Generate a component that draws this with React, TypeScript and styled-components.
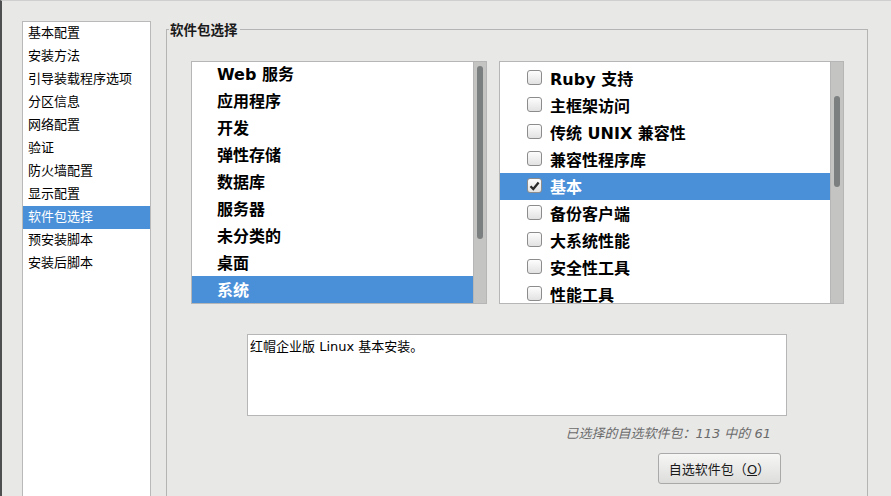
import React from 'react';
import styled, { createGlobalStyle } from 'styled-components';

const GlobalStyle = createGlobalStyle`
  html, body {
    margin: 0;
    padding: 0;
    background: #e8e8e7;
    overflow: hidden;
  }
  * { box-sizing: border-box; }
`;

const FONT = `"DejaVu Sans", "Noto Sans CJK SC", sans-serif`;

const Window = styled.div`
  width: 891px;
  height: 496px;
  overflow: hidden;
  background: #e8e8e7;
  border-top: 1px solid #cfcfcf;
  border-left: 2px solid #4e4f50;
  display: flex;
  align-items: flex-start;
  font-family: ${FONT};
  color: #000;
`;

const Nav = styled.ul`
  list-style: none;
  margin: 20px 0 0 20px;
  padding: 0;
  width: 129px;
  height: 520px;
  background: #fff;
  border: 1px solid #b9b9b9;
`;

const NavItem = styled.li<{ $active?: boolean }>`
  height: 23px;
  padding: 0 0 4px 5px;
  display: flex;
  align-items: center;
  font-size: 13px;
  background: ${p => (p.$active ? '#4a90d9' : 'transparent')};
  color: ${p => (p.$active ? '#fff' : '#000')};
`;

const Fieldset = styled.fieldset`
  margin: 18px 0 0 15px;
  padding: 0;
  width: 702px;
  height: 520px;
  border: 1px solid #b4b4b4;
  border-bottom: none;
  display: flex;
  flex-direction: column;
`;

const Legend = styled.legend`
  font-size: 13.5px;
  font-weight: bold;
  padding: 0 2px 0 1px;
  margin-left: 2px;
  color: #1a1a1a;
`;

const Lists = styled.div`
  display: flex;
  gap: 12px;
  margin: 22px 0 0 24px;
`;

const ListBox = styled.div<{ $width: number }>`
  width: ${p => p.$width}px;
  height: 243px;
  background: #fff;
  border: 1px solid #b6b6b6;
  display: flex;
  overflow: hidden;
`;

const Rows = styled.div<{ $offset: number }>`
  flex: 1;
  margin-top: ${p => p.$offset}px;
  overflow: hidden;
`;

const GroupRow = styled.div<{ $active?: boolean }>`
  height: 27px;
  padding: 0 0 2px 25px;
  display: flex;
  align-items: center;
  font-size: 16px;
  font-weight: bold;
  background: ${p => (p.$active ? '#4a90d9' : 'transparent')};
  color: ${p => (p.$active ? '#fff' : '#000')};
`;

const PackageRow = styled(GroupRow)`
  padding-left: 27px;
  gap: 8px;
  flex-shrink: 0;
`;

const Check = styled.span`
  width: 15px;
  height: 15px;
  border: 1px solid #8c8c8c;
  border-radius: 3px;
  background: linear-gradient(#fdfdfd, #e2e2e2);
  display: flex;
  align-items: center;
  justify-content: center;
  flex-shrink: 0;
`;

const Track = styled.div`
  width: 13px;
  height: 100%;
  background: #c4c5c3;
  border-left: 1px solid #b6b6b6;
  position: relative;
  flex-shrink: 0;
`;

const Thumb = styled.div`
  position: absolute;
  left: 3px;
  width: 6px;
  background: #7b7f7f;
  border-radius: 3px;
`;

const Bottom = styled.div`
  width: 540px;
  margin: 30px 0 0 80px;
  display: flex;
  flex-direction: column;
  align-items: flex-end;
`;

const Description = styled.div`
  width: 540px;
  height: 82px;
  background: #fff;
  border: 1px solid #b6b6b6;
  padding: 1px 2px;
  font-size: 13px;
  align-self: stretch;
`;

const Count = styled.div`
  margin: 7px 16px 0 0;
  font-size: 13px;
  font-style: italic;
  color: #6b6b6b;
`;

const Button = styled.button`
  margin: 11px 6px 0 0;
  width: 123px;
  height: 31px;
  border: 1px solid #a9a9a9;
  border-radius: 3px;
  background: linear-gradient(#f6f6f5, #dddddc);
  font-family: ${FONT};
  font-size: 13px;
  color: #1a1a1a;
  padding: 0;
  u { text-decoration: underline; }
`;

const groups = ['Web 服务', '应用程序', '开发', '弹性存储', '数据库', '服务器', '未分类的', '桌面', '系统'];
const packages = ['Ruby 支持', '主框架访问', '传统 UNIX 兼容性', '兼容性程序库', '基本', '备份客户端', '大系统性能', '安全性工具', '性能工具'];
const navItems = ['基本配置', '安装方法', '引导装载程序选项', '分区信息', '网络配置', '验证', '防火墙配置', '显示配置', '软件包选择', '预安装脚本', '安装后脚本'];

const CheckMark = () => (
  <svg width="11" height="10" viewBox="0 0 11 10">
    <path d="M1.5 5.2 L4.3 8 L9.6 1.6" fill="none" stroke="#2b2b2b" strokeWidth="2.3" />
  </svg>
);

export default function App() {
  return (
    <>
      <GlobalStyle />
      <Window>
        <Nav>
          {navItems.map(n => (
            <NavItem key={n} $active={n === '软件包选择'}>{n}</NavItem>
          ))}
        </Nav>
        <Fieldset>
          <Legend>软件包选择</Legend>
          <Lists>
            <ListBox $width={296}>
              <Rows $offset={-2}>
                {groups.map(g => (
                  <GroupRow key={g} $active={g === '系统'}>{g}</GroupRow>
                ))}
              </Rows>
              <Track>
                <Thumb style={{ top: 4, height: 173 }} />
              </Track>
            </ListBox>
            <ListBox $width={345}>
              <Rows $offset={3}>
                {packages.map(p => (
                  <PackageRow key={p} $active={p === '基本'}>
                    <Check>{p === '基本' && <CheckMark />}</Check>
                    {p}
                  </PackageRow>
                ))}
              </Rows>
              <Track>
                <Thumb style={{ top: 34, height: 91 }} />
              </Track>
            </ListBox>
          </Lists>
          <Bottom>
            <Description>红帽企业版 Linux 基本安装。</Description>
            <Count>已选择的自选软件包：113 中的 61</Count>
            <Button>自选软件包（<u>O</u>）</Button>
          </Bottom>
        </Fieldset>
      </Window>
    </>
  );
}
